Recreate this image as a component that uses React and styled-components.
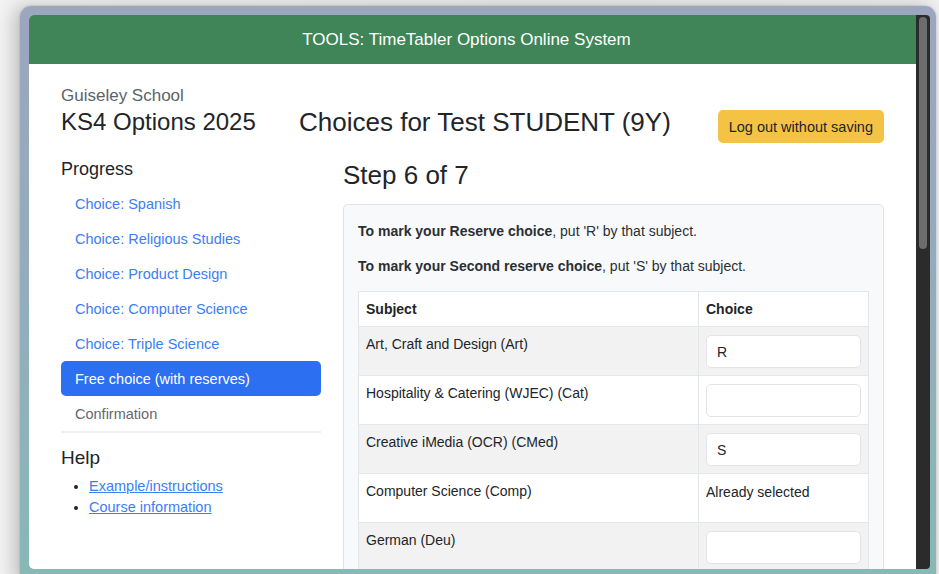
import React from 'react';
import styled, { createGlobalStyle } from 'styled-components';

const GlobalStyle = createGlobalStyle`
  html, body {
    margin: 0;
    padding: 0;
    height: 100%;
    overflow: hidden;
  }
  body {
    background: linear-gradient(90deg, #f3f3f3 0%, #ececec 60%, #f0f0f0 100%);
    font-family: "Liberation Sans", Arial, sans-serif;
    color: #212529;
  }
`;

const Stage = styled.div`
  padding: 6px 3px 0 20px;
  height: 574px;
  box-sizing: border-box;
`;

const Frame = styled.div`
  display: flex;
  height: 580px;
  box-sizing: border-box;
  padding: 9px 6px 5px 9px;
  border-radius: 11px;
  background: linear-gradient(180deg, #9ca6bf 0%, #93adbd 50%, #86b9b6 100%);
  box-shadow: -6px 0 18px rgba(0, 0, 0, 0.22), 0 0 2px rgba(0, 0, 0, 0.25);
`;

const Viewport = styled.div`
  flex: 1;
  display: flex;
  flex-direction: column;
  background: #fff;
  border-radius: 5px 0 0 5px;
  overflow: hidden;
  height: 554px;
`;

const Scrollbar = styled.div`
  width: 14px;
  background: #2b2b2b;
  border-radius: 0 4px 4px 0;
  padding: 2px 3px 0;
  box-sizing: border-box;
  height: 554px;
`;

const Thumb = styled.div`
  height: 232px;
  background: #6d6d6d;
  border-radius: 4px;
`;

const TopBar = styled.header`
  flex-shrink: 0;
  height: 49px;
  padding-right: 12px;
  background: #3f8557;
  color: #fff;
  display: flex;
  align-items: center;
  justify-content: center;
  font-size: 17px;
`;

const Body = styled.main`
  flex-shrink: 0;
  padding: 22px 32px 0 32px;
`;

const HeadRow = styled.div`
  display: flex;
  align-items: flex-start;
`;

const Brand = styled.div`
  width: 238px;
`;

const School = styled.div`
  font-size: 17px;
  line-height: 20px;
  color: #5c636a;
`;

const Year = styled.h1`
  margin: 0;
  font-size: 24px;
  line-height: 32px;
  font-weight: 400;
`;

const Title = styled.h1`
  margin: 20px 0 0;
  font-size: 26px;
  line-height: 32px;
  font-weight: 400;
`;

const LogoutButton = styled.button`
  margin: 24px 0 0 auto;
  height: 33px;
  padding: 0 11px;
  border: none;
  border-radius: 5px;
  background: #f5c344;
  color: #212529;
  font-family: inherit;
  font-size: 14.5px;
`;

const Columns = styled.div`
  display: grid;
  grid-template-columns: 260px 1fr;
  column-gap: 22px;
  margin-top: 15px;
`;

const SideHeading = styled.h2`
  margin: 0 0 6px;
  font-size: 18px;
  line-height: 22px;
  font-weight: 400;
`;

const NavList = styled.nav`
  display: flex;
  flex-direction: column;
  border-bottom: 2px solid #eef0f2;
  margin-bottom: 14px;
`;

const NavItem = styled.a`
  display: flex;
  align-items: center;
  height: 35px;
  padding: 0 14px;
  border-radius: 5px;
  font-size: 14.5px;
  text-decoration: none;
  color: ${(p) => (p.$active ? '#fff' : p.$muted ? '#636970' : '#3b7ef4')};
  background: ${(p) => (p.$active ? '#2c6ff1' : 'transparent')};
`;

const HelpHeading = styled(SideHeading)`
  font-size: 19px;
  margin-bottom: 7px;
`;

const HelpList = styled.ul`
  margin: 0;
  padding-left: 28px;
  font-size: 14.5px;
  line-height: 21px;

  a {
    color: #3b7ef4;
  }
`;

const StepHeading = styled.h2`
  margin: 2px 0 14px;
  font-size: 26px;
  line-height: 30px;
  font-weight: 400;
`;

const Card = styled.section`
  background: #f8f9fa;
  border: 1px solid #dee2e6;
  border-radius: 5px;
  padding: 16px 14px 14px;
`;

const Note = styled.p`
  margin: 0 0 15px;
  font-size: 14px;
  line-height: 20px;
  color: #2b2f33;
`;

const Table = styled.table`
  width: 100%;
  border-collapse: collapse;
  font-size: 14px;
  background: #fff;
  border: 1px solid #e3e6ea;

  th,
  td {
    border: 1px solid #e3e6ea;
    text-align: left;
    vertical-align: top;
    padding: 7px 7px;
    line-height: 20px;
  }

  th {
    font-weight: 700;
  }

  th:last-child,
  td:last-child {
    width: 155px;
  }

  tbody tr:nth-child(odd) {
    background: #f2f2f2;
  }
`;

const ChoiceInput = styled.input`
  display: block;
  box-sizing: border-box;
  width: 100%;
  height: 33px;
  margin-top: 1px;
  padding: 0 10px;
  border: 1px solid #e1e4e8;
  border-radius: 5px;
  background: #fff;
  font-family: inherit;
  font-size: 14px;
  color: #212529;
`;

const Selected = styled.span`
  display: block;
  padding-top: 1px;
  height: 33px;
`;

const steps = [
  'Choice: Spanish',
  'Choice: Religious Studies',
  'Choice: Product Design',
  'Choice: Computer Science',
  'Choice: Triple Science',
];

const subjects = [
  { name: 'Art, Craft and Design (Art)', value: 'R' },
  { name: 'Hospitality & Catering (WJEC) (Cat)', value: '' },
  { name: 'Creative iMedia (OCR) (CMed)', value: 'S' },
  { name: 'Computer Science (Comp)', taken: true },
  { name: 'German (Deu)', value: '' },
];

export default function App() {
  return (
    <>
      <GlobalStyle />
      <Stage>
        <Frame>
          <Viewport>
            <TopBar>TOOLS: TimeTabler Options Online System</TopBar>
            <Body>
              <HeadRow>
                <Brand>
                  <School>Guiseley School</School>
                  <Year>KS4 Options 2025</Year>
                </Brand>
                <Title>Choices for Test STUDENT (9Y)</Title>
                <LogoutButton>Log out without saving</LogoutButton>
              </HeadRow>
              <Columns>
                <aside>
                  <SideHeading>Progress</SideHeading>
                  <NavList>
                    {steps.map((s) => (
                      <NavItem key={s} href="#">{s}</NavItem>
                    ))}
                    <NavItem href="#" $active>Free choice (with reserves)</NavItem>
                    <NavItem $muted>Confirmation</NavItem>
                  </NavList>
                  <HelpHeading>Help</HelpHeading>
                  <HelpList>
                    <li><a href="#">Example/instructions</a></li>
                    <li><a href="#">Course information</a></li>
                  </HelpList>
                </aside>
                <div>
                  <StepHeading>Step 6 of 7</StepHeading>
                  <Card>
                    <Note><b>To mark your Reserve choice</b>, put 'R' by that subject.</Note>
                    <Note><b>To mark your Second reserve choice</b>, put 'S' by that subject.</Note>
                    <Table>
                      <thead>
                        <tr>
                          <th>Subject</th>
                          <th>Choice</th>
                        </tr>
                      </thead>
                      <tbody>
                        {subjects.map((row) => (
                          <tr key={row.name}>
                            <td>{row.name}</td>
                            <td>
                              {row.taken ? (
                                <Selected>Already selected</Selected>
                              ) : (
                                <ChoiceInput defaultValue={row.value} />
                              )}
                            </td>
                          </tr>
                        ))}
                      </tbody>
                    </Table>
                  </Card>
                </div>
              </Columns>
            </Body>
          </Viewport>
          <Scrollbar>
            <Thumb />
          </Scrollbar>
        </Frame>
      </Stage>
    </>
  );
}
